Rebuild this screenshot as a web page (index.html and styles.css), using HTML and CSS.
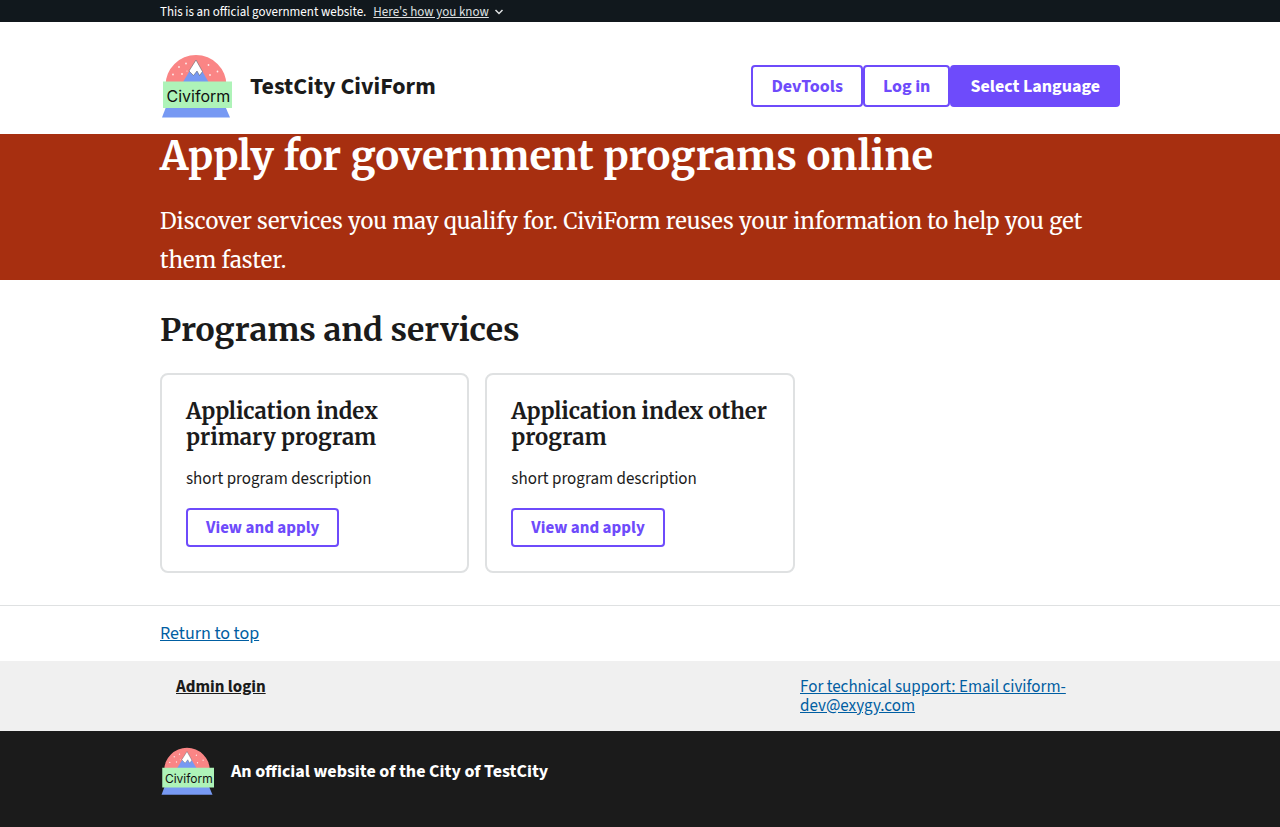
FILE: index.html
```html
<!DOCTYPE html>
<html lang="en">
<head>
<meta charset="utf-8">
<meta name="viewport" content="width=device-width, initial-scale=1">
<title>TestCity CiviForm</title>
<link rel="stylesheet" href="styles.css">
</head>
<body id="top">
<svg class="defs" aria-hidden="true">
  <symbol id="logo" viewBox="0 0 72 72">
    <path d="M5.500 35.500a30.500 30.500 0 0 1 61 0z" fill="#fa8585"/>
    <path d="M23 32 36 10.500 48.500 32z" fill="#7799f3"/>
    <path d="M36 10 42.500 21.500 39.500 25.500 37 21 33.500 25.500 29 21z" fill="#fff" stroke="#555" stroke-width=".5"/>
    <g fill="#fff" opacity=".85">
      <circle cx="13" cy="24.500" r=".9"/><circle cx="19" cy="17" r=".9"/><circle cx="26" cy="13.500" r=".9"/>
      <circle cx="22" cy="24" r=".9"/><circle cx="48.500" cy="15" r=".9"/><circle cx="57.500" cy="21.500" r=".9"/>
      <circle cx="50" cy="25" r=".9"/><circle cx="27" cy="21" r=".6"/>
    </g>
    <path d="M6 57H65.500L70 67.500H2z" fill="#7799f3"/>
    <path d="M3 31.500H72V58H3z" fill="#aef3b8"/>
    <text class="logo-word" x="6.500" y="51.500">Civiform</text>
  </symbol>
</svg>

<section class="banner" aria-label="Official government website">
  <div class="container banner-row">
    <span>This is an official government website.</span>
    <button class="banner-button" type="button"><span class="banner-link">Here's how you know</span>
      <svg class="chevron" viewBox="0 0 10 6" aria-hidden="true"><path d="m1.500 1 3.500 3.500L8.500 1"/></svg>
    </button>
  </div>
</section>

<header class="container header">
  <div class="brand">
    <svg class="logo" role="img" aria-label="Civiform"><use href="#logo"/></svg>
    <span class="brand-name">TestCity CiviForm</span>
  </div>
  <nav class="actions" aria-label="Account">
    <button class="button" type="button">DevTools</button>
    <button class="button" type="button">Log in</button>
    <button class="button button-solid" type="button">Select Language</button>
  </nav>
</header>

<main>
  <section class="hero">
    <div class="container">
      <h1 class="hero-title">Apply for government programs online</h1>
      <p class="hero-text">Discover services you may qualify for. CiviForm reuses your information to help you get them faster.</p>
    </div>
  </section>
  <section class="container programs">
    <h2 class="section-title">Programs and services</h2>
    <ul class="cards">
      <li class="card">
        <h3 class="card-title">Application index primary program</h3>
        <p class="card-text">short program description</p>
        <a class="button button-small" href="#primary">View and apply</a>
      </li>
      <li class="card">
        <h3 class="card-title">Application index other program</h3>
        <p class="card-text">short program description</p>
        <a class="button button-small" href="#other">View and apply</a>
      </li>
    </ul>
  </section>
</main>

<footer>
  <div class="return"><div class="container"><a class="link" href="#top">Return to top</a></div></div>
  <div class="support">
    <div class="container support-row">
      <a class="admin-link" href="#admin">Admin login</a>
      <a class="link" href="mailto:civiform-dev@exygy.com">For technical support: Email civiform-dev@exygy.com</a>
    </div>
  </div>
  <div class="identity">
    <div class="container identity-row">
      <svg class="logo logo-small" role="img" aria-label="Civiform"><use href="#logo"/></svg>
      <span>An official website of the City of TestCity</span>
    </div>
  </div>
</footer>
</body>
</html>
```
FILE: styles.css
```css
*, *::before, *::after { box-sizing: border-box; }

body {
  margin: 0;
  color: #1b1b1b;
  background: #fff;
  font: 17px/19px "Source Sans Pro", "Source Sans 3", "Noto Sans CJK SC", sans-serif;
}

h1, h2, h3, p, ul { margin: 0; padding: 0; }
button { font: inherit; cursor: pointer; }

.defs { display: none; }

.container {
  width: 100%;
  max-width: 1024px;
  margin: 0 auto;
  padding: 0 32px;
}

.banner { background: #11181d; color: #fff; font-size: 13px; line-height: 14px; }
.banner-row { display: flex; gap: 7px; padding-top: 5px; padding-bottom: 3px; }
.banner-button {
  display: flex;
  align-items: center;
  gap: 5px;
  padding: 0;
  border: 0;
  background: none;
  color: #dfe1e2;
}
.banner-link { text-decoration: underline; }
.chevron { width: 10px; height: 6px; fill: none; stroke: currentColor; stroke-width: 1.5; }

.header {
  display: flex;
  align-items: center;
  justify-content: space-between;
  padding-top: 28px;
  padding-bottom: 12px;
}
.brand { display: flex; align-items: center; gap: 18px; }
.brand-name { padding-top: 2px; font-size: 24px; line-height: 28px; font-weight: 700; }
.logo { width: 72px; height: 72px; }
.logo-word { font-family: Inter, Roboto, sans-serif; font-size: 16px; font-weight: 400; fill: #111; }

.actions { display: flex; font-size: 18px; }
.button {
  padding: 11px 18px 9px;
  border: 2px solid #6e4bfb;
  border-radius: 4px;
  background: #fff;
  color: #6e4bfb;
  font-weight: 700;
  line-height: 18px;
  text-align: center;
  text-decoration: none;
}
.button-solid { background: #6e4bfb; color: #fff; }
.button-small { padding: 9px 18px 7px; line-height: 19px; }

.hero { background: #a72f10; color: #fff; }
.hero-title, .hero-text, .section-title, .card-title {
  font-family: Merriweather, "DejaVu Serif Condensed", "DejaVu Serif", serif;
}
.hero-title { font-size: 40px; line-height: 44px; font-weight: 700; }
.hero-text { padding-top: 24px; font-size: 22px; line-height: 39px; }

.programs { padding-top: 32px; padding-bottom: 32px; }
.section-title { font-size: 32px; line-height: 36px; margin-bottom: 25px; }
.cards {
  display: grid;
  grid-template-columns: repeat(3, 1fr);
  gap: 16px;
  list-style: none;
}
.card {
  display: flex;
  flex-direction: column;
  align-items: flex-start;
  padding: 23px 24px 24px;
  border: 2px solid #dfe1e2;
  border-radius: 8px;
}
.card-title { font-size: 22px; line-height: 26px; }
.card-text { margin: 18px 0; line-height: 22px; }

.link { color: #005ea2; }
.return { border-top: 1px solid #dfe1e2; padding: 18px 0; font-size: 18px; }
.support { background: #f0f0f0; padding: 17px 0 15px; }
.support-row { display: grid; grid-template-columns: 2fr 1fr; }
.admin-link { padding-left: 16px; color: #1b1b1b; font-weight: 700; }

.identity { background: #1b1b1b; color: #fff; font-size: 18px; font-weight: 700; padding: 13px 0 29px; }
.identity-row { display: flex; align-items: center; gap: 17px; }
.logo-small { width: 54px; height: 54px; }
```
